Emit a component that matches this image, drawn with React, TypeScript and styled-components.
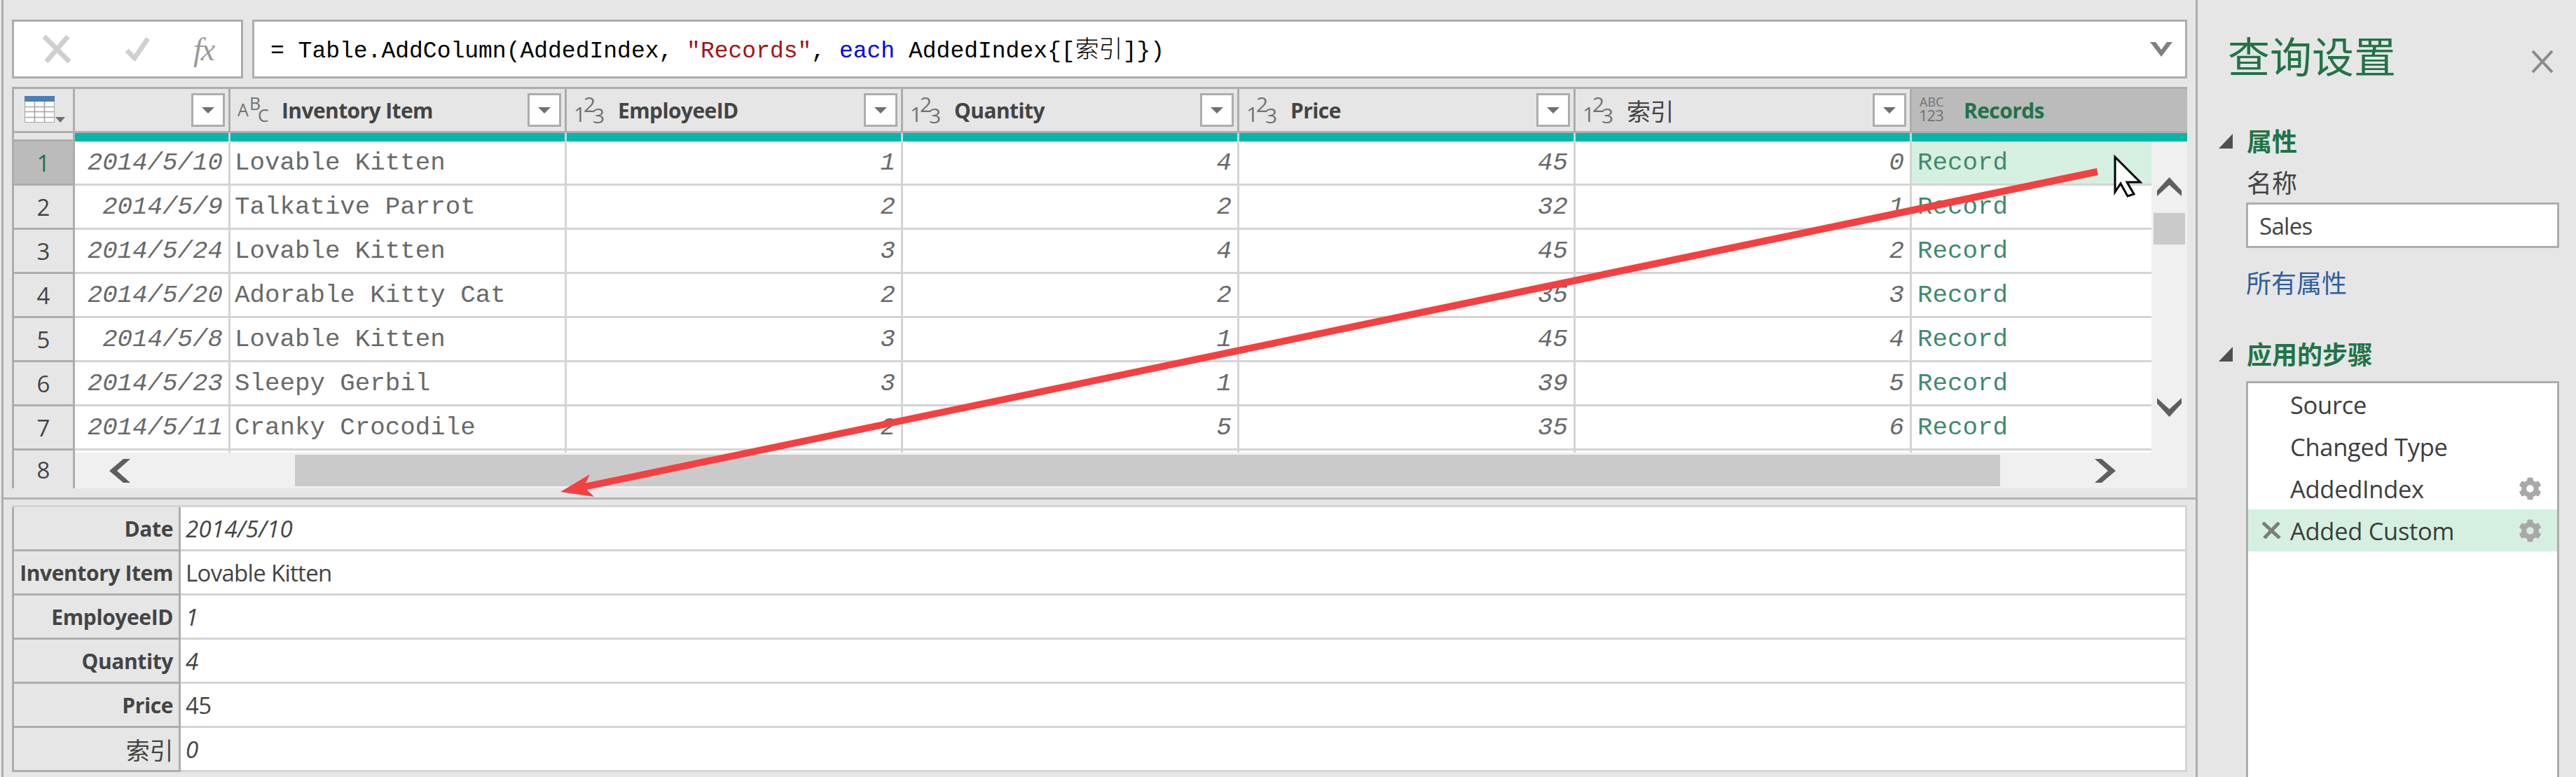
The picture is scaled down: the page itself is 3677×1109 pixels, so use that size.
import React from "react";
import styled, { createGlobalStyle } from "styled-components";
import { FaCog } from "react-icons/fa";

const GlobalStyle = createGlobalStyle`
  html, body { margin: 0; padding: 0; background: #e6e6e6; }
  * { box-sizing: border-box; }
`;

const UI = `"Open Sans", "Noto Sans CJK SC", sans-serif`;
const MONO = `"Liberation Mono", "Noto Sans CJK SC", monospace`;
const CJK = `"Noto Sans CJK SC", sans-serif`;
const DARK = "#adadad";
const LIGHT = "#d4d4d4";
const GREEN = "#217346";

const Page = styled.div`
  position: relative;
  width: 3677px;
  height: 1109px;
  overflow: hidden;
  display: flex;
  background: #e6e6e6;
  padding-left: 2px;
  font-family: ${UI};
`;
const Main = styled.main`
  width: 3135px;
  height: 1109px;
  flex: none;
  display: flex;
  flex-direction: column;
  border-left: 3px solid ${DARK};
  border-right: 3px solid ${DARK};
`;
const Workspace = styled.div`
  padding: 28px 12px 0 12px;
`;
const FormulaBar = styled.div`
  display: flex;
  gap: 13px;
  height: 84px;
`;
const FormulaTools = styled.div`
  width: 330px;
  flex: none;
  background: #fff;
  border: 3px solid ${DARK};
  display: flex;
  align-items: center;
  padding-left: 39px;
`;
const FxLabel = styled.span`
  font: italic 46px "Liberation Serif", serif;
  color: #9b9b9b;
  margin-left: 62px;
  letter-spacing: -2px;
`;
const CheckIcon = styled.svg`
  margin-left: 75px;
  flex: none;
`;
const FormulaInput = styled.div`
  flex: 1;
  background: #fff;
  border: 3px solid ${DARK};
  display: flex;
  align-items: center;
  justify-content: space-between;
  padding: 0 18px 5px 23px;
  font: 33px ${MONO};
  color: #000;
  white-space: pre;
`;
const FormulaString = styled.span`
  color: #a31515;
`;
const FormulaKeyword = styled.span`
  color: #0000ff;
`;
const FormulaCjk = styled.span`
  font-family: ${CJK};
  font-size: 34px;
  font-weight: 300;
`;
const FormulaExpand = styled.svg`
  flex: none;
  margin-top: 5px;
`;
const Grid = styled.section`
  margin-top: 12px;
  border-top: 3px solid ${DARK};
`;
const HeaderRow = styled.div`
  display: flex;
  height: 63px;
  border-bottom: 3px solid ${DARK};
`;
const CornerCell = styled.div`
  width: 90px;
  flex: none;
  border-left: 3px solid ${DARK};
  border-right: 3px solid ${DARK};
  padding: 10px 0 0 15px;
`;
const HeaderCell = styled.div<{ $w: number; $active?: boolean }>`
  width: ${(p) => p.$w}px;
  flex: none;
  display: flex;
  align-items: center;
  background: ${(p) => (p.$active ? "#bbbbbb" : "#e6e6e6")};
  border-right: ${(p) => (p.$active ? "none" : `3px solid ${DARK}`)};
  padding: 0 5px 0 10px;
`;
const HeaderIcon = styled.svg<{ $gap?: number }>`
  flex: none;
  overflow: visible;
  margin-right: ${(p) => p.$gap ?? 19}px;
`;
const HeaderTitle = styled.span<{ $active?: boolean; $cjk?: boolean }>`
  flex: 1;
  font-size: ${(p) => (p.$cjk ? 34 : 30)}px;
  font-weight: ${(p) => (p.$cjk ? 400 : 700)};
  letter-spacing: -0.6px;
  color: ${(p) => (p.$active ? GREEN : "#444")};
  white-space: nowrap;
`;
const FilterButton = styled.div`
  width: 48px;
  height: 48px;
  flex: none;
  background: #fff;
  border: 3px solid ${DARK};
  display: flex;
  align-items: center;
  justify-content: center;
`;
const GridBody = styled.div`
  display: flex;
`;
const RowNumbers = styled.div`
  width: 90px;
  flex: none;
  border-left: 3px solid ${DARK};
  border-right: 3px solid ${DARK};
`;
const RowNumberTop = styled.div`
  height: 12px;
  border-bottom: 3px solid ${DARK};
`;
const RowNumber = styled.div<{ $selected?: boolean; $last?: boolean }>`
  height: ${(p) => (p.$last ? 54 : 63)}px;
  display: flex;
  align-items: center;
  justify-content: center;
  background: ${(p) => (p.$selected ? "#bbbbbb" : "#e6e6e6")};
  border-bottom: ${(p) => (p.$last ? "none" : `3px solid ${DARK}`)};
  font-size: 33px;
  color: ${(p) => (p.$selected ? GREEN : "#444")};
`;
const GridContent = styled.div`
  flex: 1;
  min-width: 0;
`;
const TealRow = styled.div`
  display: flex;
  height: 12px;
`;
const TealCell = styled.div<{ $w: number; $last?: boolean }>`
  width: ${(p) => p.$w}px;
  flex: none;
  background: #02b7aa;
  border-right: ${(p) => (p.$last ? "none" : `3px solid ${LIGHT}`)};
`;
const Scrollable = styled.div`
  display: flex;
  height: 444px;
`;
const Rows = styled.div`
  flex: 1;
  background: #fff;
  overflow: hidden;
`;
const DataRow = styled.div`
  display: flex;
  height: 63px;
`;
const DataCell = styled.div<{
  $w: number;
  $right?: boolean;
  $italic?: boolean;
  $record?: boolean;
  $selected?: boolean;
}>`
  width: ${(p) => p.$w}px;
  flex: none;
  display: flex;
  align-items: center;
  justify-content: ${(p) => (p.$right ? "flex-end" : "flex-start")};
  padding: 1px ${(p) => (p.$right ? 8 : 10)}px 0 ${(p) => (p.$record ? 8 : 6)}px;
  background: ${(p) => (p.$selected ? "#d5f0e0" : "#fff")};
  border-right: ${(p) => (p.$record ? "none" : `3px solid ${LIGHT}`)};
  border-bottom: 3px solid ${LIGHT};
  font: ${(p) => (p.$italic ? "italic " : "")}35.8px ${MONO};
  color: ${(p) => (p.$record ? "#3f8a6c" : "#696969")};
  white-space: nowrap;
`;
const RowStub = styled.div`
  display: flex;
  height: 3px;
`;
const StubCell = styled.div<{ $w: number; $last?: boolean }>`
  width: ${(p) => p.$w}px;
  flex: none;
  border-right: ${(p) => (p.$last ? "none" : `3px solid ${LIGHT}`)};
`;
const VScroll = styled.div`
  width: 51px;
  flex: none;
  background: #f0f0f0;
  display: flex;
  flex-direction: column;
  align-items: center;
  padding: 51px 0 51px;
`;
const VThumb = styled.div`
  width: 45px;
  height: 45px;
  background: #cacaca;
  margin-top: 24px;
  margin-bottom: auto;
`;
const HScroll = styled.div`
  height: 51px;
  background: #f0f0f0;
  display: flex;
  align-items: center;
  padding: 0 102px 0 49px;
`;
const HThumb = styled.div`
  width: 2434px;
  height: 45px;
  margin: 0 auto 0 235px;
  background: #cacaca;
`;
const Divider = styled.div`
  height: 3px;
  margin-top: 13px;
  background: #b4b4b4;
`;
const Detail = styled.section`
  margin: 8px 12px 0 12px;
  border-top: 3px solid ${LIGHT};
  border-right: 3px solid ${LIGHT};
`;
const DetailRow = styled.div`
  display: flex;
  height: 63px;
`;
const DetailLabel = styled.div<{ $cjk?: boolean }>`
  width: 241px;
  flex: none;
  display: flex;
  align-items: center;
  justify-content: flex-end;
  padding-right: 8px;
  background: #e6e6e6;
  border: 3px solid ${DARK};
  border-top: none;
  font-size: ${(p) => (p.$cjk ? 34 : 30)}px;
  font-weight: ${(p) => (p.$cjk ? 400 : 700)};
  letter-spacing: -0.4px;
  color: #444;
  white-space: nowrap;
`;
const DetailValue = styled.div<{ $italic?: boolean }>`
  flex: 1;
  display: flex;
  align-items: center;
  padding-left: 7px;
  background: #fff;
  border-bottom: 3px solid ${LIGHT};
  font-size: 33px;
  font-style: ${(p) => (p.$italic ? "italic" : "normal")};
  letter-spacing: ${(p) => (p.$italic ? "0.3px" : "-0.7px")};
  color: #444;
`;
const SidePanel = styled.aside`
  flex: 1;
  display: flex;
  flex-direction: column;
  padding: 46px 24px 0 30px;
`;
const PanelHeader = styled.header`
  display: flex;
  justify-content: space-between;
  align-items: center;
  height: 70px;
  padding: 0 8px 0 13px;
`;
const PanelTitle = styled.h1`
  margin: -8px 0 0 0;
  font: 400 60px ${CJK};
  color: ${GREEN};
`;
const CloseIcon = styled.svg`
  flex: none;
  margin-top: 14px;
`;
const SectionTitle = styled.h2<{ $top: number }>`
  display: flex;
  align-items: center;
  gap: 20px;
  margin: ${(p) => p.$top}px 0 0 0;
  font: 700 36px/44px ${CJK};
  color: ${GREEN};
`;
const Triangle = styled.svg`
  flex: none;
  margin-top: 3px;
`;
const FieldLabel = styled.div`
  margin: 15px 0 0 40px;
  font: 36px/44px ${CJK};
  color: #444;
`;
const NameInput = styled.div`
  height: 65px;
  margin: 8px 0 0 39px;
  background: #fff;
  border: 3px solid ${DARK};
  display: flex;
  align-items: center;
  padding: 2px 0 0 16px;
  font-size: 33px;
  letter-spacing: -0.7px;
  color: #444;
`;
const PropertyLink = styled.div`
  margin: 26px 0 0 39px;
  font: 36px/44px ${CJK};
  color: #2e5f9e;
`;
const StepList = styled.div`
  flex: 1;
  margin: 18px 0 0 39px;
  background: #fff;
  border: 3px solid ${DARK};
  border-bottom: none;
`;
const StepRow = styled.div<{ $selected?: boolean }>`
  height: 60px;
  display: flex;
  align-items: center;
  gap: 12px;
  padding: 0 22px 0 18px;
  background: ${(p) => (p.$selected ? "#d5f0e0" : "transparent")};
  font-size: 34.5px;
  letter-spacing: -0.3px;
  color: #3d3d3d;
`;
const StepIconSlot = styled.div`
  width: 30px;
  flex: none;
  display: flex;
  justify-content: center;
`;
const StepName = styled.span`
  flex: 1;
`;
const Overlay = styled.svg`
  position: absolute;
  left: 0;
  top: 0;
  pointer-events: none;
`;

const Caret = () => (
  <svg width="18" height="9" viewBox="0 0 18 9">
    <polygon points="0,0 18,0 9,9" fill="#707070" />
  </svg>
);

const Num123 = () => (
  <HeaderIcon width="44" height="42" viewBox="0 0 44 42">
    <g fontFamily="Open Sans, sans-serif" fontSize="30" fill="#727272">
      <text x="0" y="38">1</text>
      <text x="14" y="24">2</text>
      <text x="27" y="40">3</text>
    </g>
  </HeaderIcon>
);
const AbcIcon = () => (
  <HeaderIcon width="44" height="42" viewBox="0 0 44 42">
    <g fontFamily="Open Sans, sans-serif" fontSize="25" fill="#727272">
      <text x="0" y="30">A</text>
      <text x="17" y="21">B</text>
      <text x="29" y="38">C</text>
    </g>
  </HeaderIcon>
);
const AnyIcon = () => (
  <HeaderIcon width="42" height="40" viewBox="0 0 42 40" $gap={22}>
    <g fontFamily="Open Sans, sans-serif" fill="#727272">
      <text x="1" y="15" fontSize="18">ABC</text>
      <text x="0" y="36" fontSize="22" letterSpacing="-1">123</text>
    </g>
  </HeaderIcon>
);
const TableIcon = () => (
  <svg width="60" height="40" viewBox="0 0 60 40">
    <rect x="0.5" y="0.5" width="42" height="37" fill="#fff" stroke="#a5a5a5" />
    <rect x="0" y="0" width="43" height="8" fill="#4a7ebb" />
    <path d="M14.5 8v30M28.5 8v30M0 15.5h43M0 22.5h43M0 30.5h43" stroke="#a5a5a5" strokeWidth="1.6" />
    <polygon points="44,30 58,30 51,38" fill="#707070" />
  </svg>
);
const ChevronUp = () => (
  <svg width="35" height="27" viewBox="0 0 35 27">
    <polygon points="17.5,0 35,19 35,27 17.5,11 0,27 0,19" fill="#5f5f5f" />
  </svg>
);
const ChevronDown = () => (
  <svg width="35" height="27" viewBox="0 0 35 27">
    <polygon points="17.5,27 35,8 35,0 17.5,16 0,0 0,8" fill="#5f5f5f" />
  </svg>
);
const ChevronLeft = () => (
  <svg width="30" height="34" viewBox="0 0 30 34">
    <polygon points="0,17 20,0 30,0 11,17 30,34 20,34" fill="#5f5f5f" />
  </svg>
);
const ChevronRight = () => (
  <svg width="30" height="34" viewBox="0 0 30 34">
    <polygon points="30,17 10,0 0,0 19,17 0,34 10,34" fill="#5f5f5f" />
  </svg>
);

const widths = [222, 480, 480, 480, 480, 480, 393];
const headers: { title: string; icon: React.ReactNode; cjk?: boolean }[] = [
  { title: "", icon: null },
  { title: "Inventory Item", icon: <AbcIcon /> },
  { title: "EmployeeID", icon: <Num123 /> },
  { title: "Quantity", icon: <Num123 /> },
  { title: "Price", icon: <Num123 /> },
  { title: "索引", icon: <Num123 />, cjk: true },
];
const rows: [string, string, number, number, number, number][] = [
  ["2014/5/10", "Lovable Kitten", 1, 4, 45, 0],
  ["2014/5/9", "Talkative Parrot", 2, 2, 32, 1],
  ["2014/5/24", "Lovable Kitten", 3, 4, 45, 2],
  ["2014/5/20", "Adorable Kitty Cat", 2, 2, 35, 3],
  ["2014/5/8", "Lovable Kitten", 3, 1, 45, 4],
  ["2014/5/23", "Sleepy Gerbil", 3, 1, 39, 5],
  ["2014/5/11", "Cranky Crocodile", 2, 5, 35, 6],
];
const details: { label: string; value: string; italic?: boolean; cjk?: boolean }[] = [
  { label: "Date", value: "2014/5/10", italic: true },
  { label: "Inventory Item", value: "Lovable Kitten" },
  { label: "EmployeeID", value: "1", italic: true },
  { label: "Quantity", value: "4", italic: true },
  { label: "Price", value: "45" },
  { label: "索引", value: "0", italic: true, cjk: true },
];
const steps = ["Source", "Changed Type", "AddedIndex", "Added Custom"];

export default function App() {
  return (
    <Page>
      <GlobalStyle />
      <Main>
        <Workspace>
          <FormulaBar>
            <FormulaTools>
              <svg width="44" height="42" viewBox="0 0 44 42">
                <path d="M4 3 L40 39 M38 3 L7 39" stroke="#cfcfcf" strokeWidth="7" fill="none" />
              </svg>
              <CheckIcon width="36" height="34" viewBox="0 0 36 34">
                <path d="M3 19 L14 30 L33 2" stroke="#d0d0d0" strokeWidth="7" fill="none" />
              </CheckIcon>
              <FxLabel>fx</FxLabel>
            </FormulaTools>
            <FormulaInput>
              <span>
                = Table.AddColumn(AddedIndex, <FormulaString>"Records"</FormulaString>, <FormulaKeyword>each</FormulaKeyword> AddedIndex{"{["}
                <FormulaCjk>索引</FormulaCjk>
                {"]})"}
              </span>
              <FormulaExpand width="32" height="21" viewBox="0 0 32 21">
                <polygon points="0,0 8,0 16,11 24,0 32,0 16,21" fill="#808080" />
              </FormulaExpand>
            </FormulaInput>
          </FormulaBar>
          <Grid>
            <HeaderRow>
              <CornerCell>
                <TableIcon />
              </CornerCell>
              {headers.map((h, i) => (
                <HeaderCell key={i} $w={widths[i]}>
                  {h.icon}
                  <HeaderTitle $cjk={h.cjk}>{h.title}</HeaderTitle>
                  <FilterButton>
                    <Caret />
                  </FilterButton>
                </HeaderCell>
              ))}
              <HeaderCell $w={widths[6]} $active>
                <AnyIcon />
                <HeaderTitle $active>Records</HeaderTitle>
              </HeaderCell>
            </HeaderRow>
            <GridBody>
              <RowNumbers>
                <RowNumberTop />
                {[1, 2, 3, 4, 5, 6, 7].map((n) => (
                  <RowNumber key={n} $selected={n === 1}>
                    {n}
                  </RowNumber>
                ))}
                <RowNumber $last>8</RowNumber>
              </RowNumbers>
              <GridContent>
                <TealRow>
                  {widths.map((w, i) => (
                    <TealCell key={i} $w={w} $last={i === 6} />
                  ))}
                </TealRow>
                <Scrollable>
                  <Rows>
                    {rows.map((r, i) => (
                      <DataRow key={i}>
                        <DataCell $w={widths[0]} $right $italic>{r[0]}</DataCell>
                        <DataCell $w={widths[1]}>{r[1]}</DataCell>
                        <DataCell $w={widths[2]} $right $italic>{r[2]}</DataCell>
                        <DataCell $w={widths[3]} $right $italic>{r[3]}</DataCell>
                        <DataCell $w={widths[4]} $right $italic>{r[4]}</DataCell>
                        <DataCell $w={widths[5]} $right $italic>{r[5]}</DataCell>
                        <DataCell $w={342} $record $selected={i === 0}>Record</DataCell>
                      </DataRow>
                    ))}
                    <RowStub>
                      {widths.slice(0, 6).map((w, i) => (
                        <StubCell key={i} $w={w} />
                      ))}
                    </RowStub>
                  </Rows>
                  <VScroll>
                    <ChevronUp />
                    <VThumb />
                    <ChevronDown />
                  </VScroll>
                </Scrollable>
                <HScroll>
                  <ChevronLeft />
                  <HThumb />
                  <ChevronRight />
                </HScroll>
              </GridContent>
            </GridBody>
          </Grid>
        </Workspace>
        <Divider />
        <Detail>
          {details.map((d) => (
            <DetailRow key={d.label}>
              <DetailLabel $cjk={d.cjk}>{d.label}</DetailLabel>
              <DetailValue $italic={d.italic}>{d.value}</DetailValue>
            </DetailRow>
          ))}
        </Detail>
      </Main>
      <SidePanel>
        <PanelHeader>
          <PanelTitle>查询设置</PanelTitle>
          <CloseIcon width="32" height="32" viewBox="0 0 32 32">
            <path d="M2 1 L30 31 M30 1 L2 31" stroke="#8a8a8a" strokeWidth="4" fill="none" />
          </CloseIcon>
        </PanelHeader>
        <SectionTitle $top={62}>
          <Triangle width="20" height="21" viewBox="0 0 20 21">
            <polygon points="20,0 20,21 0,21" fill="#4f4f4f" />
          </Triangle>
          属性
        </SectionTitle>
        <FieldLabel>名称</FieldLabel>
        <NameInput>Sales</NameInput>
        <PropertyLink>所有属性</PropertyLink>
        <SectionTitle $top={58}>
          <Triangle width="20" height="21" viewBox="0 0 20 21">
            <polygon points="20,0 20,21 0,21" fill="#4f4f4f" />
          </Triangle>
          应用的步骤
        </SectionTitle>
        <StepList>
          {steps.map((s, i) => (
            <StepRow key={s} $selected={i === 3}>
              <StepIconSlot>
                {i === 3 && (
                  <svg width="28" height="24" viewBox="0 0 28 24">
                    <path d="M2 1 L26 23 M25 1 L4 23" stroke="#7d7d7d" strokeWidth="5" fill="none" />
                  </svg>
                )}
              </StepIconSlot>
              <StepName>{s}</StepName>
              {i >= 2 && <FaCog size={33} color="#a8a8a8" />}
            </StepRow>
          ))}
        </StepList>
      </SidePanel>
      <Overlay width="3677" height="1109" viewBox="0 0 3677 1109">
        <polygon
          points="800,702 842,677 836,689.5 2993,240 2995,250 838,699 848,709"
          fill="#f44040"
        />
        <polygon
          points="3019,224 3055,260 3036,260 3046,277 3037,280 3027,262 3019,274"
          fill="#fff"
          stroke="#000"
          strokeWidth="3"
          strokeLinejoin="miter"
        />
      </Overlay>
    </Page>
  );
}
